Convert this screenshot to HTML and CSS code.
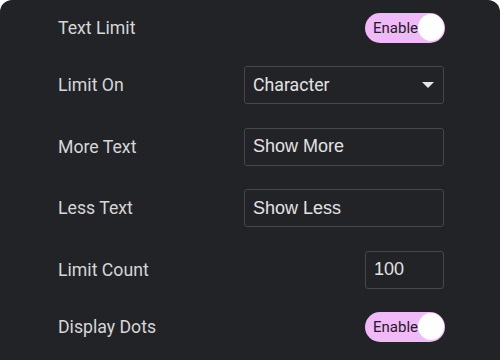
FILE: index.html
```html
<!DOCTYPE html>
<html>
<head>
<meta charset="utf-8">
<link rel="stylesheet" href="styles.css">
</head>
<body>
<div class="panel">
  <div class="row">
    <span class="label">Text Limit</span>
    <div class="toggle"><span class="toggle-text">Enable</span><span class="knob"></span></div>
  </div>
  <div class="row">
    <span class="label">Limit On</span>
    <div class="select"><span>Character</span><span class="caret"></span></div>
  </div>
  <div class="row">
    <span class="label">More Text</span>
    <div class="input wide">Show More</div>
  </div>
  <div class="row">
    <span class="label">Less Text</span>
    <div class="input wide">Show Less</div>
  </div>
  <div class="row">
    <span class="label">Limit Count</span>
    <div class="input small">100</div>
  </div>
  <div class="row">
    <span class="label">Display Dots</span>
    <div class="toggle"><span class="toggle-text">Enable</span><span class="knob"></span></div>
  </div>
</div>
</body>
</html>
```
FILE: styles.css
```css
html, body {
  margin: 0;
  padding: 0;
  background: #ffffff;
}
.panel {
  width: 500px;
  height: 360px;
  box-sizing: border-box;
  background: #222327;
  border-radius: 12px 12px 0 0;
  padding: 13px 56px 0 58px;
  display: flex;
  flex-direction: column;
  gap: 23.5px;
  font-family: Roboto, "Liberation Sans", sans-serif;
}
.row {
  display: flex;
  justify-content: space-between;
  align-items: center;
}
.label {
  color: #d6d6d8;
  font-size: 17.7px;
}
.toggle {
  width: 80px;
  height: 29.5px;
  margin-right: -1px;
  box-sizing: border-box;
  border-radius: 15px;
  background: #f0b9f8;
  display: flex;
  align-items: center;
  justify-content: space-between;
  padding: 0 1px 0 8px;
}
.toggle-text {
  color: #1f1a24;
  font-size: 15px;
}
.knob {
  width: 27px;
  height: 27px;
  border-radius: 50%;
  background: #ffffff;
}
.select, .input {
  height: 38px;
  box-sizing: border-box;
  border: 1px solid #46474c;
  border-radius: 3px;
  color: #e2e2e4;
  display: flex;
  align-items: center;
}
.select {
  width: 200px;
  padding: 0 8px 0 8px;
  justify-content: space-between;
  font-size: 17.7px;
}
.caret {
  width: 0;
  height: 0;
  border-left: 6px solid transparent;
  border-right: 6px solid transparent;
  border-top: 6px solid #e6e6e8;
  margin-right: 1px;
}
.input {
  font-family: "Liberation Sans", Arial, sans-serif;
  font-size: 18px;
  padding: 0 8px;
}
.wide { width: 200px; }
.small { width: 79px; }
```
